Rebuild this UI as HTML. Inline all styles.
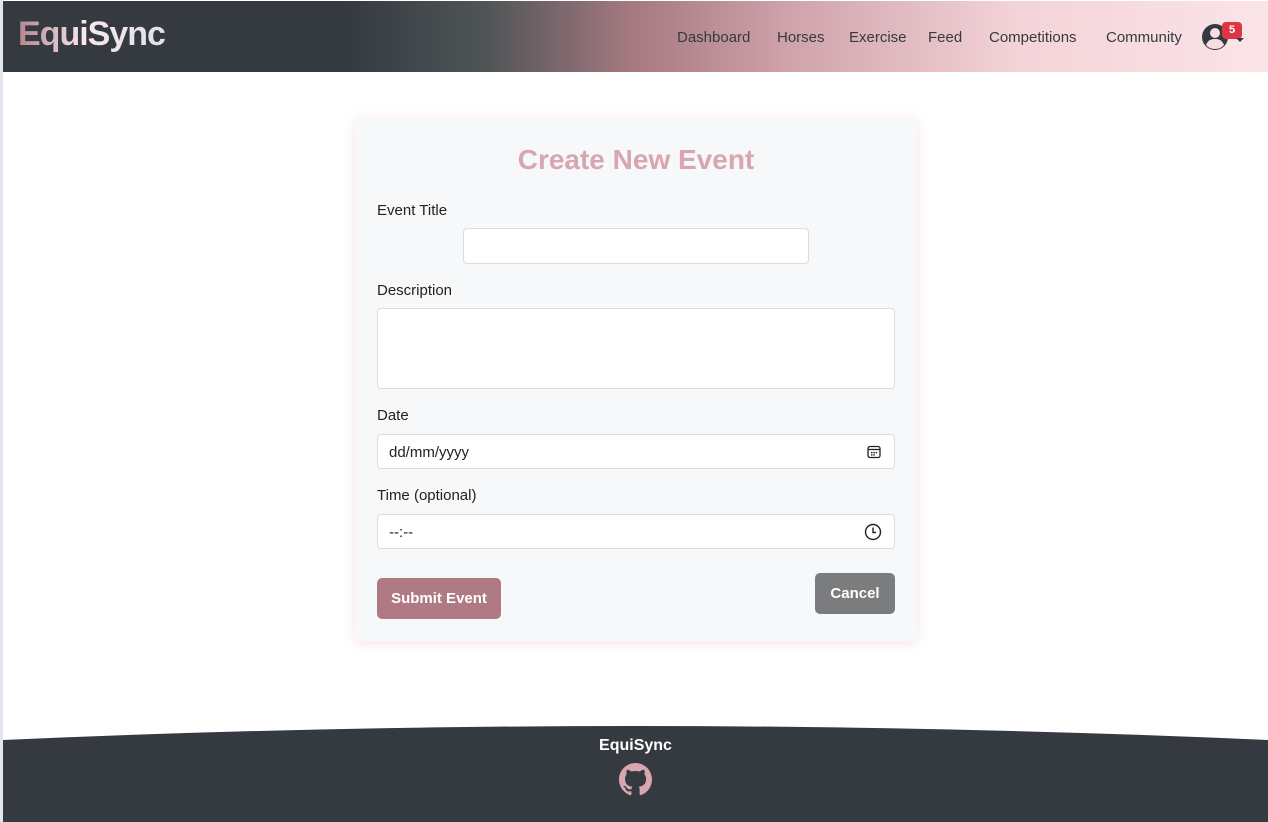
<!DOCTYPE html>
<html><head><style>
*{box-sizing:border-box;margin:0;padding:0}
body{width:1268px;height:822px;overflow:hidden;background:#fff;font-family:"Liberation Sans",sans-serif;position:relative}
.strip{position:absolute;left:0;top:0;width:3px;height:822px;background:#e4e4f0}
.hdr{position:absolute;left:3px;top:1px;width:1265px;height:71px;background:linear-gradient(90deg,#343a40 0%,#343a40 27%,#4f5456 38%,#a77a82 50%,#cfa2ab 62%,#f3d3d8 80%,#fbe4e8 100%)}
.logo{position:absolute;left:15px;top:14px;font-size:34px;font-weight:bold;background:linear-gradient(90deg,#b4858d,#f8e8ec 45%,#e0e0e8);-webkit-background-clip:text;color:transparent;letter-spacing:-1px}
.nav{position:absolute;top:28px;font-size:15px;color:#343a40}
.card{position:absolute;left:355px;top:118px;width:562px;height:523px;background:#f7f8f9;border-radius:8px;box-shadow:0 2px 12px rgba(230,170,180,.35)}
h1{position:absolute;left:0;width:100%;top:26px;text-align:center;font-size:28px;color:#d8a6ae;font-weight:bold}
.lbl{position:absolute;left:22px;font-size:15px;color:#222}
.inp{position:absolute;background:#fff;border:1px solid #d9dce0;border-radius:4px;font-size:15px;color:#222;padding:9px 11px}
.btn{position:absolute;color:#fff;font-weight:bold;font-size:15px;border-radius:5px;text-align:center}
.foot{position:absolute;left:3px;top:720px;width:1265px;height:102px}
</style></head><body>
<div class="strip"></div>
<div class="hdr">
<div class="logo">EquiSync</div>
<span class="nav" style="left:674px">Dashboard</span>
<span class="nav" style="left:774px">Horses</span>
<span class="nav" style="left:846px">Exercise</span>
<span class="nav" style="left:925px">Feed</span>
<span class="nav" style="left:986px">Competitions</span>
<span class="nav" style="left:1103px">Community</span>
<svg style="position:absolute;left:1197px;top:21px" width="30" height="30" viewBox="0 0 30 30"><circle cx="15" cy="15" r="13" fill="#343a40"/><circle cx="15" cy="11" r="5" fill="#f7dce0"/><path d="M6 23c2-5 5-6 9-6s7 1 9 6c-2 2.5-5 4-9 4s-7-1.5-9-4z" fill="#f7dce0"/></svg>
<div style="position:absolute;left:1219px;top:21px;width:20px;height:17px;background:#dc3545;border-radius:4px;color:#fff;font-size:11px;font-weight:bold;text-align:center;line-height:17px">5</div>
<div style="position:absolute;left:1233px;top:37px;border:4px solid transparent;border-top-color:#343a40"></div>
</div>
<div class="card">
<h1>Create New Event</h1>
<div class="lbl" style="top:84px">Event Title</div>
<div class="inp" style="left:108px;top:110px;width:346px;height:36px"></div>
<div class="lbl" style="top:164px">Description</div>
<div class="inp" style="left:22px;top:190px;width:518px;height:81px"></div>
<div class="lbl" style="top:289px">Date</div>
<div class="inp" style="left:22px;top:316px;width:518px;height:35px">dd/mm/yyyy
<svg style="position:absolute;right:13px;top:10px" width="14" height="14" viewBox="0 0 14 14"><rect x="1" y="1.5" width="12" height="11" rx="2" fill="none" stroke="#222" stroke-width="1.3"/><line x1="1" y1="4.5" x2="13" y2="4.5" stroke="#222" stroke-width="1.3"/><rect x="4" y="7" width="1.5" height="1.3" fill="#222"/><rect x="6.3" y="7" width="1.5" height="1.3" fill="#222"/><rect x="8.6" y="7" width="1.5" height="1.3" fill="#222"/><rect x="4" y="9.3" width="1.5" height="1.3" fill="#222"/><rect x="6.3" y="9.3" width="1.5" height="1.3" fill="#222"/></svg></div>
<div class="lbl" style="top:369px">Time (optional)</div>
<div class="inp" style="left:22px;top:396px;width:518px;height:35px">--:--
<svg style="position:absolute;right:12px;top:8px" width="18" height="18" viewBox="0 0 18 18"><circle cx="9" cy="9" r="7.5" fill="none" stroke="#222" stroke-width="1.4"/><path d="M9 4.5V9.5H12" fill="none" stroke="#222" stroke-width="1.4"/></svg></div>
<div class="btn" style="left:22px;top:460px;width:124px;height:41px;line-height:41px;background:#b07a84">Submit Event</div>
<div class="btn" style="left:460px;top:455px;width:80px;height:41px;line-height:41px;background:#7b7c7d">Cancel</div>
</div>
<svg class="foot" viewBox="0 0 1265 102" preserveAspectRatio="none"><path d="M0 20Q632 -8 1265 20V102H0Z" fill="#343a40"/></svg>
<div style="position:absolute;left:3px;width:1265px;top:737px;text-align:center;color:#fff;font-weight:bold;font-size:16px">EquiSync</div>
<svg style="position:absolute;left:619px;top:763px" width="33" height="33" viewBox="0 0 16 16"><path fill="#d8a6ae" d="M8 0C3.58 0 0 3.58 0 8c0 3.540 2.29 6.53 5.47 7.59.4.07.55-.17.55-.38 0-.19-.01-.82-.01-1.490-2.01.37-2.53-.49-2.69-.94-.09-.23-.48-.94-.82-1.130-.28-.15-.68-.52-.01-.53.63-.01 1.08.58 1.23.82.72 1.210 1.87.87 2.33.66.07-.52.28-.87.51-1.070-1.780-.2-3.640-.89-3.640-3.950 0-.87.31-1.590.82-2.150-.08-.2-.36-1.020.08-2.120 0 0 .67-.21 2.200.82.64-.18 1.320-.27 2-.27.68 0 1.360.09 2 .27 1.530-1.040 2.200-.82 2.200-.82.44 1.100.16 1.920.08 2.120.51.56.82 1.270.82 2.150 0 3.070-1.870 3.750-3.650 3.950.29.25.54.73.54 1.480 0 1.070-.01 1.930-.01 2.200 0 .21.15.46.55.38A8.013 8.013 0 0016 8c0-4.420-3.580-8-8-8z"/></svg>
</body></html>
